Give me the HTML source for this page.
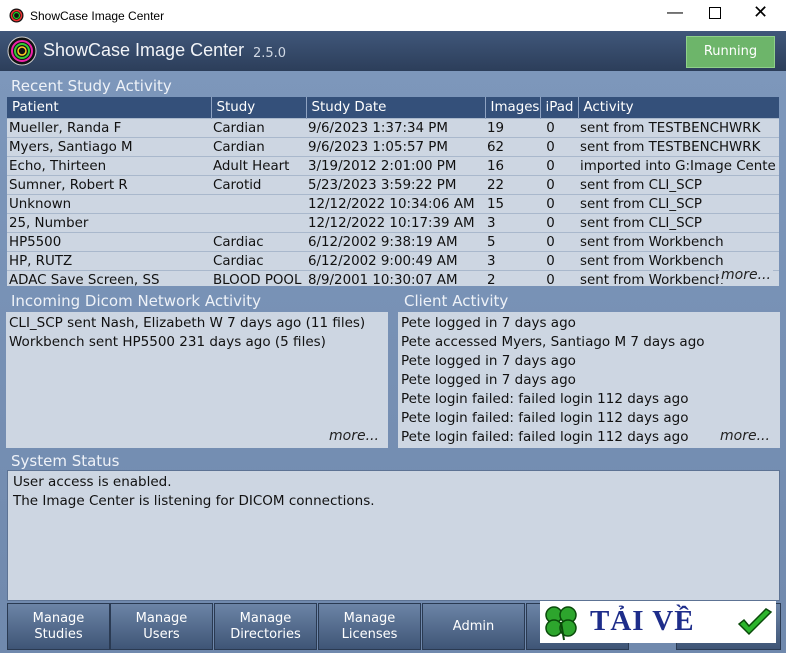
<!DOCTYPE html><html><head><style>
body{margin:0;width:786px;height:653px;overflow:hidden;font-family:"DejaVu Sans","Liberation Sans",sans-serif;background:#7890b3;position:relative}
.a{position:absolute}
.tb{left:0;top:0;width:786px;height:31px;background:#fff;font-size:12px;font-family:"Liberation Sans",sans-serif}
.hd{left:0;top:31px;width:786px;height:40px;background:linear-gradient(#40577a,#2c3e5a)}
.body{left:0;top:71px;width:786px;height:582px;background:linear-gradient(#7d97bb,#7089ad)}
.t{color:#eef2f8;font-size:15px}
table{border-collapse:collapse;font-size:13.4px;color:#111;table-layout:fixed}
th{background:#34507a;color:#fff;font-weight:normal;text-align:left;padding:0 5px;height:21px;border-left:1px solid #8fa3c2;overflow:hidden;white-space:nowrap}
td{padding:0 2px 0 2px;height:18px;border-top:1px solid #a9b8cc;white-space:nowrap;overflow:hidden}
.p{background:#cdd6e2;font-size:13.5px;color:#111;line-height:19px}
.more{font-style:italic;font-size:14px;color:#222}
.btn{top:603px;height:45px;width:101px;background:linear-gradient(#6c84a6,#3f5576);border:1px solid #2a3a52;color:#fff;font-size:13px;text-align:center;display:flex;align-items:center;justify-content:center;line-height:16px}
</style></head><body>
<div class="a tb"><svg class="a" style="left:9px;top:8px" width="15" height="15"><circle cx="7.5" cy="7.5" r="7" fill="#111"/><circle cx="7.5" cy="7.5" r="5" fill="none" stroke="#e33" stroke-width="1.5"/><circle cx="7.5" cy="7.5" r="3" fill="none" stroke="#2c2" stroke-width="1.2"/></svg>
<span class="a" style="left:30px;top:9px">ShowCase Image Center</span>
<span class="a" style="left:667px;top:4px;font-size:16px">&#8212;</span>
<span class="a" style="left:709px;top:7px;width:10px;height:10px;border:1px solid #000"></span>
<span class="a" style="left:753px;top:2px;font-size:18px">✕</span></div>
<div class="a hd"><svg class="a" style="left:7px;top:5px" width="30" height="30"><circle cx="15" cy="15" r="14" fill="#111" stroke="#ccc"/><circle cx="15" cy="15" r="10" fill="none" stroke="#e2a" stroke-width="2"/><circle cx="15" cy="15" r="7" fill="none" stroke="#3c3" stroke-width="2"/><circle cx="15" cy="15" r="4" fill="none" stroke="#fc2" stroke-width="1.5"/></svg>
<span class="a" style="left:43px;top:9px;color:#f2f4f8;font-size:18px;font-family:'Liberation Sans',sans-serif">ShowCase Image Center</span>
<span class="a" style="left:253px;top:15px;color:#d0d8e4;font-size:13px">2.5.0</span>
<div class="a" style="left:686px;top:5px;width:87px;height:30px;background:#6db56a;border:1px solid #8fd08a;color:#fff;font-size:13px;text-align:center;line-height:30px">Running</div></div>
<div class="a body"></div>
<div class="a t" style="left:11px;top:77px">Recent Study Activity</div>
<div class="a" style="left:7px;top:97px;width:772px;height:189px;background:#cdd6e2;overflow:hidden">
<table style="width:772px"><colgroup><col style="width:204px"><col style="width:95px"><col style="width:179px"><col style="width:55px"><col style="width:38px"><col></colgroup><tr><th style="border-left:none">Patient</th><th>Study</th><th>Study Date</th><th>Images</th><th>iPad</th><th>Activity</th></tr>
<tr><td>Mueller, Randa F</td><td>Cardian</td><td>9/6/2023 1:37:34 PM</td><td>19</td><td>&nbsp;0</td><td>sent from TESTBENCHWRK</td></tr>
<tr><td>Myers, Santiago M</td><td>Cardian</td><td>9/6/2023 1:05:57 PM</td><td>62</td><td>&nbsp;0</td><td>sent from TESTBENCHWRK</td></tr>
<tr><td>Echo, Thirteen</td><td>Adult Heart</td><td>3/19/2012 2:01:00 PM</td><td>16</td><td>&nbsp;0</td><td>imported into G:Image Cente</td></tr>
<tr><td>Sumner, Robert R</td><td>Carotid</td><td>5/23/2023 3:59:22 PM</td><td>22</td><td>&nbsp;0</td><td>sent from CLI_SCP</td></tr>
<tr><td>Unknown</td><td></td><td>12/12/2022 10:34:06 AM</td><td>15</td><td>&nbsp;0</td><td>sent from CLI_SCP</td></tr>
<tr><td>25, Number</td><td></td><td>12/12/2022 10:17:39 AM</td><td>3</td><td>&nbsp;0</td><td>sent from CLI_SCP</td></tr>
<tr><td>HP5500</td><td>Cardiac</td><td>6/12/2002 9:38:19 AM</td><td>5</td><td>&nbsp;0</td><td>sent from Workbench</td></tr>
<tr><td>HP, RUTZ</td><td>Cardiac</td><td>6/12/2002 9:00:49 AM</td><td>3</td><td>&nbsp;0</td><td>sent from Workbench</td></tr>
<tr><td>ADAC Save Screen, SS</td><td>BLOOD POOL</td><td>8/9/2001 10:30:07 AM</td><td>2</td><td>&nbsp;0</td><td>sent from Workbench</td></tr></table>
<span class="a more" style="left:712px;top:170px;background:#cdd6e2;padding:0 2px">more...</span></div>
<div class="a t" style="left:11px;top:292px">Incoming Dicom Network Activity</div>
<div class="a t" style="left:404px;top:292px">Client Activity</div>
<div class="a p" style="left:6px;top:312px;width:379px;height:134px;padding:2px 0 0 3px">CLI_SCP sent Nash, Elizabeth W 7 days ago (11 files)<br>Workbench sent HP5500 231 days ago (5 files)<span class="a more" style="left:323px;top:115px">more...</span></div>
<div class="a p" style="left:398px;top:312px;width:379px;height:134px;padding:2px 0 0 3px">Pete logged in 7 days ago<br>Pete accessed Myers, Santiago M 7 days ago<br>Pete logged in 7 days ago<br>Pete logged in 7 days ago<br>Pete login failed: failed login 112 days ago<br>Pete login failed: failed login 112 days ago<br>Pete login failed: failed login 112 days ago<span class="a more" style="left:322px;top:115px">more...</span></div>
<div class="a t" style="left:11px;top:452px">System Status</div>
<div class="a p" style="left:7px;top:470px;width:766px;height:127px;padding:2px 0 0 5px;border:1px solid #5d7394">User access is enabled.<br>The Image Center is listening for DICOM connections.</div>
<div class="a btn" style="left:7px">Manage<br>Studies</div>
<div class="a btn" style="left:110px">Manage<br>Users</div>
<div class="a btn" style="left:214px">Manage<br>Directories</div>
<div class="a btn" style="left:318px">Manage<br>Licenses</div>
<div class="a btn" style="left:422px">Admin</div>
<div class="a btn" style="left:526px"></div>
<div class="a btn" style="left:676px;width:103px"></div>
<div class="a" style="left:540px;top:601px;width:236px;height:42px;background:#fff">
<svg class="a" style="left:2px;top:2px" width="38" height="38"><g fill="#2da52d" stroke="#0a4a0a" stroke-width="1.5"><circle cx="12" cy="12" r="8"/><circle cx="26" cy="12" r="8"/><circle cx="12" cy="25" r="8"/><circle cx="26" cy="25" r="8"/></g><path d="M19 19 L22 37" stroke="#0a4a0a" stroke-width="2"/></svg>
<span class="a" style="left:50px;top:4px;font-family:'Liberation Serif',serif;font-weight:bold;font-size:29px;color:#1e2d8a;letter-spacing:1px">TẢI VỀ</span>
<svg class="a" style="left:196px;top:6px" width="38" height="32"><path d="M3 17 L13 27 L35 5 L30 2 L13 19 L8 13 Z" fill="#2db52d" stroke="#0a4a0a" stroke-width="1.5"/></svg></div>
</body></html>
